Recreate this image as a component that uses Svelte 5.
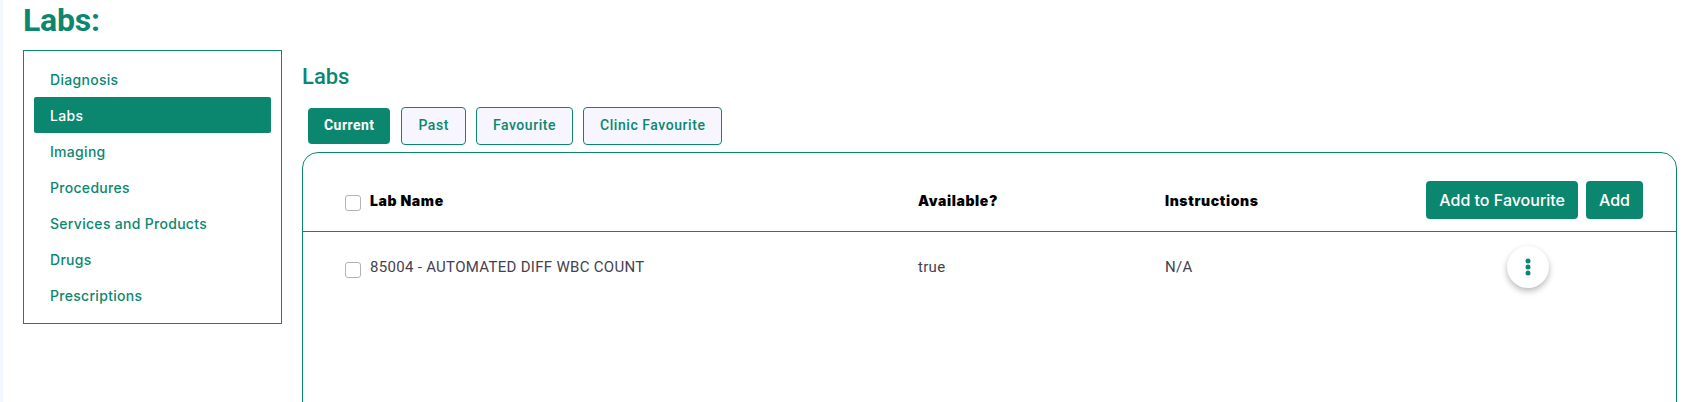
<script>
    const menu = ["Diagnosis", "Labs", "Imaging", "Procedures", "Services and Products", "Drugs", "Prescriptions"];
    const tabs = ["Current", "Past", "Favourite", "Clinic Favourite"];
    let activeMenu = "Labs";
    let activeTab = "Current";
</script>

<div class="page">
    <h1 class="title">Labs:</h1>
    <div class="layout">
        <nav class="side">
            {#each menu as item}
                <button class="side-item" class:active={item === activeMenu} on:click={() => (activeMenu = item)}>{item}</button>
            {/each}
        </nav>
        <main class="content">
            <h2 class="heading">Labs</h2>
            <div class="tabs">
                {#each tabs as tab}
                    <button class="tab" class:current={tab === activeTab} on:click={() => (activeTab = tab)}>{tab}</button>
                {/each}
            </div>
            <section class="card">
                <div class="row head">
                    <label class="name"><input type="checkbox" /><span>Lab Name</span></label>
                    <span>Available?</span>
                    <span>Instructions</span>
                    <div class="actions">
                        <button class="action">Add to Favourite</button>
                        <button class="action">Add</button>
                    </div>
                </div>
                <div class="row item">
                    <label class="name"><input type="checkbox" /><span>85004 - AUTOMATED DIFF WBC COUNT</span></label>
                    <span>true</span>
                    <span>N/A</span>
                    <button class="kebab" aria-label="More">
                        <svg width="6" height="18" viewBox="0 0 6 18"><circle cx="3" cy="3" r="2.5" /><circle cx="3" cy="9" r="2.5" /><circle cx="3" cy="15" r="2.5" /></svg>
                    </button>
                </div>
            </section>
        </main>
    </div>
</div>

<style>
:global(body) {
    margin: 0;
    background: #fff;
}

.page {
    height: 402px;
    overflow: hidden;
    box-sizing: border-box;
    padding: 0 9px 0 20px;
    border-left: 3px solid #f1f8ff;
    font-family: Roboto, sans-serif;
}

.title {
    margin: 0;
    height: 50px;
    line-height: 41px;
    font-size: 32px;
    font-weight: 700;
    letter-spacing: -0.2px;
    color: #0b8770;
}

.layout {
    display: flex;
    align-items: flex-start;
    gap: 20px;
}

.side {
    width: 259px;
    height: 274px;
    box-sizing: border-box;
    border: 1px solid #0b8770;
    padding: 10px;
    display: flex;
    flex-direction: column;
}

.side-item {
    height: 36px;
    flex: none;
    border: 0;
    border-radius: 2px;
    background: none;
    padding: 0 16px;
    text-align: left;
    font-family: Inter, sans-serif;
    font-size: 14px;
    font-weight: 500;
    letter-spacing: 0.3px;
    color: #0b8770;
}

.side-item.active {
    background: #0b8770;
    color: #fff;
}

.content {
    flex: 1;
    min-width: 0;
}

.heading {
    margin: 15px 0 0;
    height: 42px;
    line-height: 24px;
    font-size: 22px;
    font-weight: 500;
    color: #0b8770;
}

.tabs {
    display: flex;
    gap: 10px;
    padding-left: 6px;
    height: 45px;
}

.tab {
    height: 38px;
    box-sizing: border-box;
    padding: 0 16px 2px;
    border: 1px solid #0b8770;
    border-radius: 4px;
    background: #f7f5fe;
    font-family: Roboto, sans-serif;
    font-size: 14px;
    font-weight: 500;
    letter-spacing: 0.55px;
    color: #0b8770;
}

.tab.current {
    height: 36px;
    margin: 1px 1px 0 0;
    border: 0;
    background: #0b8770;
    color: #fff;
    font-weight: 700;
    letter-spacing: 0.45px;
}

.card {
    height: 300px;
    box-sizing: border-box;
    border: 1px solid #0b8770;
    border-radius: 16px 16px 0 0;
    background: #fff;
}

.row {
    display: grid;
    grid-template-columns: 573px 247px 1fr auto;
    align-items: center;
    padding: 0 33px 0 42px;
}

.head {
    height: 79px;
    box-sizing: border-box;
    padding-top: 28px;
    padding-bottom: 12px;
    border-bottom: 1px solid #0b8770;
    font-family: Inter, sans-serif;
    font-size: 14px;
    font-weight: 900;
    letter-spacing: 0.6px;
    color: #000;
}

.item {
    padding-top: 14px;
    padding-right: 127px;
    font-size: 15px;
    letter-spacing: 0.3px;
    color: #45414f;
}

.name {
    display: flex;
    gap: 9px;
    align-items: center;
}

.name input {
    appearance: none;
    flex: none;
    width: 16px;
    height: 16px;
    margin: 6px 0 0;
    border: 1px solid #b3b3b3;
    border-radius: 3px;
    background: #fff;
}

.actions {
    display: flex;
    gap: 8px;
}

.action {
    height: 38px;
    padding: 0 13px;
    border: 0;
    border-radius: 4px;
    background: #0b8770;
    color: #fff;
    font-family: Inter, sans-serif;
    font-size: 16px;
    font-weight: 500;
}

.kebab {
    display: flex;
    align-items: center;
    justify-content: center;
    width: 42px;
    height: 42px;
    border: 0;
    border-radius: 50%;
    background: #fff;
    box-shadow: 0 3px 6px rgba(0, 0, 0, 0.28);
    padding: 0;
}

.kebab svg {
    fill: #0b8770;
}
</style>
